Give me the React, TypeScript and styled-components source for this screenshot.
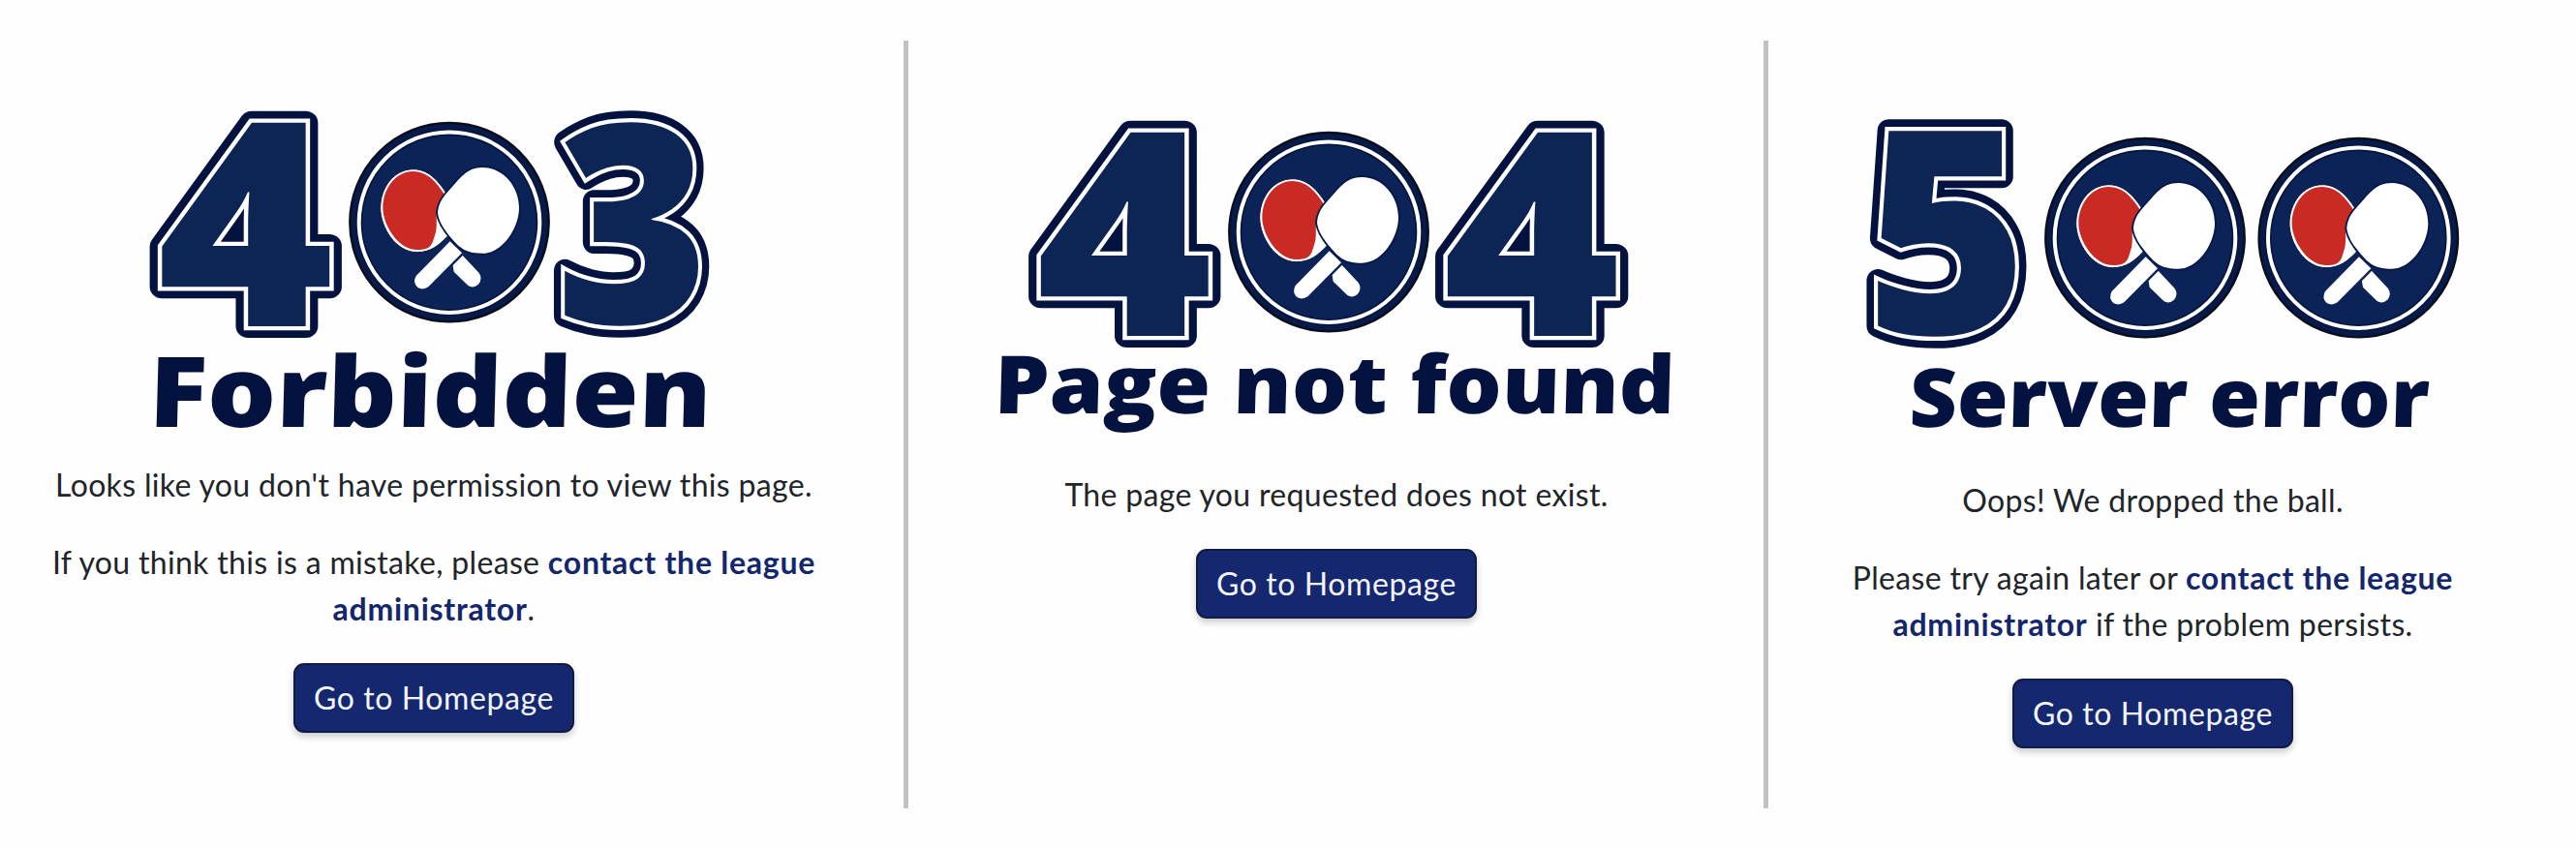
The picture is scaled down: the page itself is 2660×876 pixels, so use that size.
import React from "react";
import styled, { createGlobalStyle } from "styled-components";

const GlobalStyle = createGlobalStyle`
  * { box-sizing: border-box; }
  body {
    margin: 0;
    background: #fefefe;
    color: #212429;
    font-family: Lato, sans-serif;
  }
`;

const Page = styled.main`
  display: grid;
  grid-template-columns: 933px 5px 883px 5px 834px;
  width: 2660px;
  height: 876px;
  overflow: hidden;
`;

const Divider = styled.div`
  margin: 42px 0 41px;
  background: #c1c1c1;
`;

const Panel = styled.section<{ $top: number; $left?: number; $right?: number }>`
  display: flex;
  flex-direction: column;
  align-items: center;
  padding: ${(p) => `${p.$top}px ${p.$right ?? 0}px 0 ${p.$left ?? 0}px`};
`;

const Artwork = styled.svg`
  display: block;
  flex: none;
  overflow: visible;
`;

const DigitText = styled.text`
  font-family: "Open Sans", sans-serif;
  font-weight: 800;
  fill: #0d2554;
`;

const DigitEdge = styled(DigitText)`
  fill: #04123f;
  stroke: #04123f;
  stroke-width: 24px;
  stroke-linejoin: round;
`;

const DigitTrim = styled(DigitText)`
  fill: #fff;
  stroke: #fff;
  stroke-width: 8.5px;
  stroke-linejoin: miter;
  stroke-miterlimit: 2;
`;

const Caption = styled.text`
  font-family: "Open Sans", sans-serif;
  font-weight: 800;
  fill: #04123f;
`;

const Message = styled.p`
  margin: 0 0 32px;
  font-size: 32px;
  line-height: 48px;
  text-align: center;
  white-space: nowrap;
  letter-spacing: 0.33px;

  &:last-of-type {
    margin-bottom: 32px;
  }
`;

const ContactLink = styled.a`
  color: #14276d;
  font-weight: 700;
  letter-spacing: 0.75px;
  text-decoration: none;
`;

const HomeButton = styled.button`
  width: 290px;
  height: 72px;
  padding: 0;
  border: 2px solid #0f1b42;
  border-radius: 11px;
  background: #14276f;
  box-shadow: 0 4px 7px rgba(0, 0, 0, 0.2);
  color: #f2f4fc;
  font: 400 32px/48px Lato, sans-serif;
  letter-spacing: 0.6px;
`;

type DigitProps = { value: string; x: number; y: number; size: number; stretch: number };

function Digit({ value, x, y, size, stretch }: DigitProps) {
  const transform = `translate(${x} ${y}) scale(${stretch} 1)`;
  return (
    <g transform={transform} fontSize={size}>
      <DigitEdge aria-hidden>{value}</DigitEdge>
      <DigitTrim aria-hidden>{value}</DigitTrim>
      <DigitText>{value}</DigitText>
    </g>
  );
}

function PaddleBadge({ cx, cy }: { cx: number; cy: number }) {
  return (
    <g transform={`translate(${cx} ${cy})`}>
      <circle r="102.7" fill="#071b4b" stroke="#090d1c" strokeWidth="2.4" />
      <circle r="93.3" fill="#0b2357" stroke="#061640" strokeWidth="7.5" />
      <circle r="93.3" fill="none" stroke="#fff" strokeWidth="4" />
      <g transform="scale(.3333) translate(-342 -345)" strokeLinejoin="round">
        <path
          d="M334 256C305 212 275 180 230 180C170 180 128 238 128 300C128 360 176 438 242 438C285 438 310 415 334 391L380 340Z"
          fill="#fff"
          stroke="#061640"
          strokeWidth="3"
        />
        <path
          d="M329 262C300 215 270 187 230 187C175 187 136 242 136 300C136 350 182 430 242 430C290 430 288 412 300 375C305 350 300 330 304 312C308 292 322 280 329 262Z"
          fill="#c92a23"
        />
        <path d="M340 400L356 498L400 541Q416 551 432 537Q446 520 434 502L380 444Z" fill="#fff" />
        <path
          d="M344 404L381 440L277 545Q262 556 245 548Q227 532 239 511Z"
          fill="#fff"
          stroke="#0b2357"
          strokeWidth="14"
          paintOrder="stroke"
        />
        <path
          d="M335 253C375 210 393 175 445 175C510 175 558 235 558 300C558 362 507 441 445 441C395 441 377 427 350 396C325 367 308 340 306 315C308 290 318 272 335 253Z"
          fill="#fff"
          stroke="#07194a"
          strokeWidth="12"
          paintOrder="stroke"
        />
      </g>
    </g>
  );
}

type CaptionProps = { children: string; x: number; y: number; width: number; size: number };

function CaptionLine({ children, x, y, width, size }: CaptionProps) {
  return (
    <g transform={`translate(${x} ${y}) skewX(-1.5)`}>
      <Caption fontSize={size} textLength={width} lengthAdjust="spacingAndGlyphs">
        {children}
      </Caption>
    </g>
  );
}

export default function App() {
  return (
    <>
      <GlobalStyle />
      <Page>
        <Panel $top={104} $right={37}>
          <Artwork width="600" height="373" viewBox="0 0 600 373">
            <Digit value="4" x={14} y={233} size={294.5} stretch={1.06} />
            <PaddleBadge cx={316} cy={125.7} />
            <Digit value="3" x={426} y={230} size={287} stretch={0.94} />
            <CaptionLine x={5} y={336.7} width={581} size={101}>
              Forbidden
            </CaptionLine>
          </Artwork>
          <Message>Looks like you don't have permission to view this page.</Message>
          <Message>
            If you think this is a mistake, please <ContactLink>contact the league</ContactLink>
            <br />
            <ContactLink>administrator</ContactLink>.
          </Message>
          <HomeButton>Go to Homepage</HomeButton>
        </Panel>
        <Divider />
        <Panel $top={114} $left={1}>
          <Artwork width="720" height="373" viewBox="0 0 720 373">
            <Digit value="4" x={49.5} y={233} size={294.5} stretch={1.06} />
            <PaddleBadge cx={352} cy={125.7} />
            <Digit value="4" x={469.5} y={233} size={294.5} stretch={1.065} />
            <CaptionLine x={6} y={312.7} width={703} size={83}>
              Page not found
            </CaptionLine>
          </Artwork>
          <Message>The page you requested does not exist.</Message>
          <HomeButton>Go to Homepage</HomeButton>
        </Panel>
        <Divider />
        <Panel $top={112} $right={40}>
          <Artwork width="640" height="381" viewBox="0 0 640 381">
            <Digit value="5" x={23} y={233} size={294} stretch={0.975} />
            <PaddleBadge cx={312} cy={133.7} />
            <PaddleBadge cx={532.3} cy={133.7} />
            <CaptionLine x={68} y={328.7} width={537} size={84}>
              Server error
            </CaptionLine>
          </Artwork>
          <Message>Oops! We dropped the ball.</Message>
          <Message>
            Please try again later or <ContactLink>contact the league</ContactLink>
            <br />
            <ContactLink>administrator</ContactLink> if the problem persists.
          </Message>
          <HomeButton>Go to Homepage</HomeButton>
        </Panel>
      </Page>
    </>
  );
}
